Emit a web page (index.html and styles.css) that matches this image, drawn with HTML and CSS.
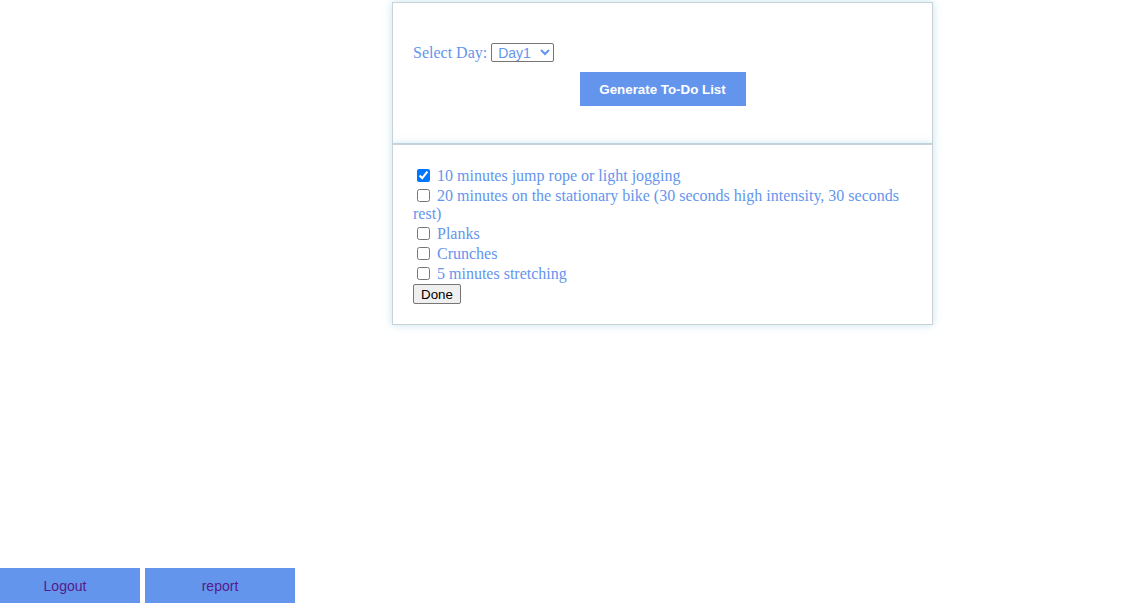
FILE: index.html
```html
<!DOCTYPE html>
<html>
<head>
<meta charset="utf-8">
<link rel="stylesheet" href="styles.css">
</head>
<body>
<div class="page">
  <main class="main">
    <section class="panel panel-top">
      <div class="day-row">
        <label class="day-label" for="day">Select Day:</label>
        <select id="day" class="day-select"><option>Day1</option><option>Day2</option></select>
      </div>
      <div class="gen-row">
        <button class="gen-btn">Generate To-Do List</button>
      </div>
    </section>
    <section class="panel panel-list">
      <div class="item"><input type="checkbox" checked> <span>10 minutes jump rope or light jogging</span></div>
      <div class="item"><input type="checkbox"> <span>20 minutes on the stationary bike (30 seconds high intensity, 30 seconds rest)</span></div>
      <div class="item"><input type="checkbox"> <span>Planks</span></div>
      <div class="item"><input type="checkbox"> <span>Crunches</span></div>
      <div class="item"><input type="checkbox"> <span>5 minutes stretching</span></div>
      <button class="done-btn">Done</button>
    </section>
  </main>
  <footer class="footer">
    <a class="foot-btn foot-logout" href="#">Logout</a>
    <a class="foot-btn foot-report" href="#">report</a>
  </footer>
</div>
</body>
</html>
```
FILE: styles.css
```css
html, body {
  margin: 0;
  padding: 0;
  background: #ffffff;
}
.page {
  height: 613px;
  display: flex;
  flex-direction: column;
  box-sizing: border-box;
  padding-bottom: 10px;
}
.main {
  margin-left: 392px;
  width: 541px;
  padding-top: 2px;
}
.panel {
  box-sizing: border-box;
  border: 1px solid #c8d2d8;
  box-shadow: 0 0 8px rgba(173, 216, 230, 0.7);
  background: #fff;
  font-family: "Liberation Serif", "Times New Roman", serif;
  font-size: 16px;
  color: #6495ed;
}
.panel-top {
  height: 142px;
  padding: 40px 20px 0 20px;
}
.day-row {
  display: flex;
  align-items: center;
  height: 19px;
}
.day-label {
  margin-right: 4px;
}
.day-select {
  width: 63px;
  height: 19px;
  font-family: "Liberation Sans", Arial, sans-serif;
  font-size: 14px;
  color: #6495ed;
  border: 1px solid #767676;
  border-radius: 2px;
  background: #fff;
  padding: 0 0 0 2px;
}
.gen-row {
  display: flex;
  justify-content: center;
  margin-top: 10px;
}
.gen-btn {
  width: 166px;
  height: 34px;
  border: none;
  background: #6495ed;
  color: #fff;
  font-family: "Liberation Sans", Arial, sans-serif;
  font-weight: bold;
  font-size: 13.33px;
  padding: 0;
}
.panel-list {
  padding: 20px 20px 20px 20px;
}
.item {
  line-height: 18px;
  padding-top: 2px;
}
.item input {
  margin: 0 3px 0 4px;
  width: 13px;
  height: 13px;
  vertical-align: -1px;
}
.done-btn {
  display: block;
  margin-top: 1px;
  width: 48px;
  height: 20px;
  padding: 0;
  font-family: "Liberation Sans", Arial, sans-serif;
  font-size: 13.33px;
  color: #000;
  background: #efefef;
  border: 1px solid #767676;
  border-radius: 2px;
}
.footer {
  margin-top: auto;
  display: flex;
  gap: 5px;
}
.foot-btn {
  display: flex;
  align-items: center;
  justify-content: center;
  height: 35px;
  background: #6495ed;
  color: #551a8b;
  text-decoration: none;
  font-family: "Liberation Sans", Arial, sans-serif;
  font-size: 14px;
}
.foot-logout {
  width: 130px;
  padding-right: 10px;
}
.foot-report { width: 150px; }
```
